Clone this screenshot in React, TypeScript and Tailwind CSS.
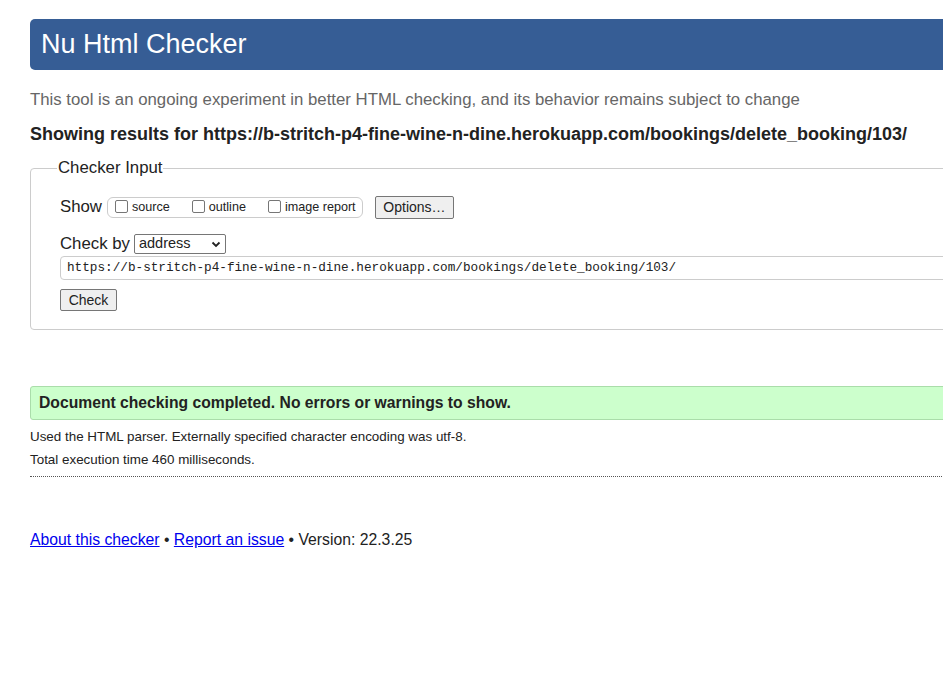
import React from 'react'

function Box({ label }: { label: string }) {
  return (
    <label className='flex items-center gap-[4px]'>
      <span className='w-[13px] h-[13px] border border-[#767676] rounded-[2px] bg-white inline-block'></span>
      <span className='text-[12.6px]'>{label}</span>
    </label>
  )
}

export default function App() {
  return (
    <div className='overflow-hidden w-[943px] h-[684px] bg-white text-[#222] font-["Liberation_Sans",Arial,sans-serif]'>
      <div className='ml-[30px] w-[1100px] pt-[19px]'>
        <div className='bg-[#365d95] rounded-[5px] h-[51px] flex items-center pl-[11px]'>
          <h1 className='text-white text-[27px] leading-none'>Nu Html Checker</h1>
        </div>

        <p className='text-[#666] text-[16.8px] mt-[19px] leading-[21px]'>This tool is an ongoing experiment in better HTML checking, and its behavior remains subject to change</p>
        <p className='font-bold text-[18px] mt-[13px] leading-[22px]'>Showing results for https://b-stritch-p4-fine-wine-n-dine.herokuapp.com/bookings/delete_booking/103/</p>

        <fieldset className='mt-[13px] border border-[#ccc] rounded-[4px] pl-[29px] pt-[18px] pb-[17px]'>
          <legend className='text-[16.8px] ml-[-3px] px-[1px] leading-[20px]'>Checker Input</legend>
          <div className='flex items-center h-[22px]'>
            <span className='text-[16.8px]'>Show</span>
            <div className='ml-[5px] border border-[#ccc] rounded-[6px] h-[21px] w-[256px] flex items-center pl-[7px] gap-[22px]'>
              <Box label='source' />
              <Box label='outline' />
              <Box label='image report' />
            </div>
            <button className='ml-[12px] h-[23px] w-[79px] border border-[#767676] rounded-[2px] bg-[#efefef] text-[14px]'>Options…</button>
          </div>
          <div className='flex items-center mt-[16px] h-[20px]'>
            <span className='text-[16.8px]'>Check by</span>
            <div className='ml-[4px] border border-[#767676] rounded-[2px] h-[20px] w-[92px] flex items-center justify-between px-[4px] text-[14.5px]'>
              <span>address</span>
              <svg width='10' height='10' viewBox='0 0 10 10'><path d='M1.5 3.5 L5 7 L8.5 3.5' stroke='#222' strokeWidth='1.8' fill='none' /></svg>
            </div>
          </div>
          <div className='mt-[2px] border border-[#ccc] rounded-[4px] h-[24px] flex items-center pl-[6px] font-["Liberation_Mono",monospace] text-[12.7px]'>
            https://b-stritch-p4-fine-wine-n-dine.herokuapp.com/bookings/delete_booking/103/
          </div>
          <button className='mt-[9px] h-[22px] w-[57px] border border-[#767676] rounded-[2px] bg-[#efefef] text-[14px]'>Check</button>
        </fieldset>

        <div className='mt-[56px] bg-[#ccffcc] border border-[#aaddaa] rounded-[3px] h-[34px] flex items-center pl-[8px]'>
          <p className='font-bold text-[15.7px]'>Document checking completed. No errors or warnings to show.</p>
        </div>
        <p className='text-[13.4px] mt-[9px] leading-[16px]'>Used the HTML parser. Externally specified character encoding was utf-8.</p>
        <p className='text-[13.4px] mt-[7px] leading-[16px]'>Total execution time 460 milliseconds.</p>
        <div className='mt-[8px] border-t border-dotted border-[#555]'></div>

        <p className='mt-[51px] text-[15.75px]'>
          <a className='text-[#00e] underline' href='#'>About this checker</a> • <a className='text-[#00e] underline' href='#'>Report an issue</a> • Version: 22.3.25
        </p>
      </div>
    </div>
  )
}
